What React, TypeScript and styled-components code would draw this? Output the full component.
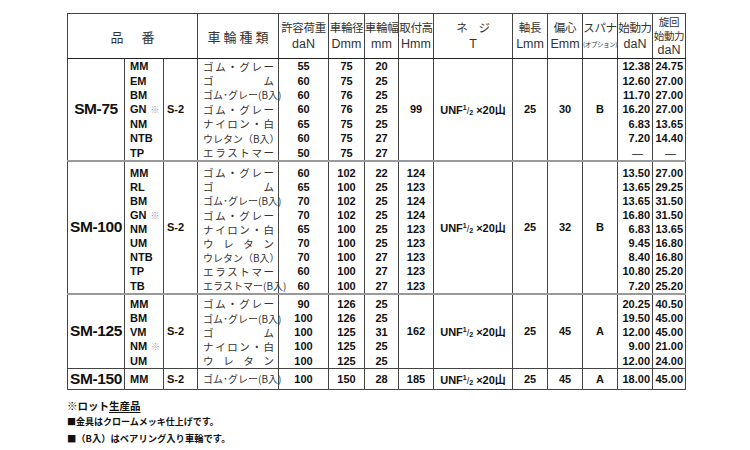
import React from 'react';
import styled, { createGlobalStyle } from 'styled-components';

const GlobalStyle = createGlobalStyle`
  html, body {
    margin: 0;
    padding: 0;
    background: #fff;
  }
  body {
    font-family: 'Liberation Sans', 'Noto Sans CJK JP', sans-serif;
    color: #111;
  }
`;

type Row = {
  code: string;
  mark?: boolean;
  name: string;
  compact?: boolean;
  load: string;
  dia: string;
  width: string;
  h?: string;
  f1: string;
  f2: string;
};

type Group = {
  model: string;
  height: number;
  lh: number;
  pt: number;
  sep: 'none' | 'light' | 'dark';
  h?: string;
  l: string;
  e: string;
  spanner: string;
  rows: Row[];
};

const groups: Group[] = [
  {
    model: 'SM-75', height: 101, lh: 14.4, pt: 0, sep: 'none', h: '99', l: '25', e: '30', spanner: 'B',
    rows: [
      { code: 'MM', name: 'ゴム・グレー', load: '55', dia: '75', width: '20', f1: '12.38', f2: '24.75' },
      { code: 'EM', name: 'ゴム', load: '60', dia: '75', width: '25', f1: '12.60', f2: '27.00' },
      { code: 'BM', name: 'ゴム･グレー(B入)', compact: true, load: '60', dia: '76', width: '25', f1: '11.70', f2: '27.00' },
      { code: 'GN', mark: true, name: 'ゴム・グレー', load: '60', dia: '76', width: '25', f1: '16.20', f2: '27.00' },
      { code: 'NM', name: 'ナイロン・白', load: '65', dia: '75', width: '25', f1: '6.83', f2: '13.65' },
      { code: 'NTB', name: 'ウレタン（B入）', compact: true, load: '60', dia: '75', width: '27', f1: '7.20', f2: '14.40' },
      { code: 'TP', name: 'エラストマー', load: '50', dia: '75', width: '27', f1: '—', f2: '—' },
    ],
  },
  {
    model: 'SM-100', height: 133, lh: 14.1, pt: 4, sep: 'light', l: '25', e: '32', spanner: 'B',
    rows: [
      { code: 'MM', name: 'ゴム・グレー', load: '60', dia: '102', width: '22', h: '124', f1: '13.50', f2: '27.00' },
      { code: 'RL', name: 'ゴム', load: '65', dia: '100', width: '25', h: '123', f1: '13.65', f2: '29.25' },
      { code: 'BM', name: 'ゴム･グレー(B入)', compact: true, load: '70', dia: '102', width: '25', h: '124', f1: '13.65', f2: '31.50' },
      { code: 'GN', mark: true, name: 'ゴム・グレー', load: '70', dia: '102', width: '25', h: '124', f1: '16.80', f2: '31.50' },
      { code: 'NM', name: 'ナイロン・白', load: '65', dia: '100', width: '25', h: '123', f1: '6.83', f2: '13.65' },
      { code: 'UM', name: 'ウレタン', load: '70', dia: '100', width: '25', h: '123', f1: '9.45', f2: '16.80' },
      { code: 'NTB', name: 'ウレタン（B入）', compact: true, load: '70', dia: '100', width: '27', h: '123', f1: '8.40', f2: '16.80' },
      { code: 'TP', name: 'エラストマー', load: '60', dia: '100', width: '27', h: '123', f1: '10.80', f2: '25.20' },
      { code: 'TB', name: 'エラストマー(B入)', compact: true, load: '60', dia: '100', width: '27', h: '123', f1: '7.20', f2: '25.20' },
    ],
  },
  {
    model: 'SM-125', height: 73, lh: 14.2, pt: 2, sep: 'light', h: '162', l: '25', e: '45', spanner: 'A',
    rows: [
      { code: 'MM', name: 'ゴム・グレー', load: '90', dia: '126', width: '25', f1: '20.25', f2: '40.50' },
      { code: 'BM', name: 'ゴム･グレー(B入)', compact: true, load: '100', dia: '126', width: '25', f1: '19.50', f2: '45.00' },
      { code: 'VM', name: 'ゴム', load: '100', dia: '125', width: '31', f1: '12.00', f2: '45.00' },
      { code: 'NM', mark: true, name: 'ナイロン・白', load: '100', dia: '125', width: '25', f1: '9.00', f2: '21.00' },
      { code: 'UM', name: 'ウレタン', load: '100', dia: '125', width: '25', f1: '12.00', f2: '24.00' },
    ],
  },
  {
    model: 'SM-150', height: 21, lh: 20, pt: 0, sep: 'dark', h: '185', l: '25', e: '45', spanner: 'A',
    rows: [
      { code: 'MM', name: 'ゴム･グレー(B入)', compact: true, load: '100', dia: '150', width: '28', f1: '18.00', f2: '45.00' },
    ],
  },
];

const colWidths = [57, 39, 34, 81, 50, 36, 34, 35, 79, 35, 35, 35, 35, 33];

const Page = styled.div`
  width: 750px;
  height: 450px;
  padding: 13px 0 0 67px;
  box-sizing: border-box;
  overflow: hidden;
`;

const Table = styled.table`
  border-collapse: collapse;
  table-layout: fixed;
  width: 618px;
`;

const Th = styled.th`
  height: 44px;
  padding: 0;
  border: 1px solid #444;
  border-bottom-color: #222;
  font-weight: 400;
  color: #333;
  vertical-align: middle;
  text-align: center;
  white-space: nowrap;
`;

const HeadStack = styled.div<{ $gap?: number }>`
  display: flex;
  flex-direction: column;
  align-items: center;
  gap: ${p => p.$gap ?? 3}px;
`;

const HeadJa = styled.div<{ $size?: number }>`
  font-family: 'Noto Sans CJK JP', sans-serif;
  font-size: ${p => p.$size ?? 11.5}px;
  line-height: 14px;
  letter-spacing: -0.3px;
`;

const HeadUnit = styled.div`
  font-family: 'Liberation Sans', Arial, sans-serif;
  font-size: 12.5px;
  line-height: 15px;
`;

const HeadTiny = styled.div`
  font-family: 'Noto Sans CJK JP', sans-serif;
  font-size: 6.5px;
  line-height: 15px;
  letter-spacing: -0.4px;
`;

const TitleJa = styled.div<{ $gap: number }>`
  display: flex;
  justify-content: center;
  gap: ${p => p.$gap}px;
  font-family: 'Noto Sans CJK JP', sans-serif;
  font-size: 13px;
  color: #333;
`;

const Tr = styled.tr<{ $h: number; $sep: Group['sep'] }>`
  height: ${p => p.$h}px;
  & > td {
    border-top: ${p => (p.$sep === 'light' ? '2px solid #999' : '1px solid #222')};
  }
`;

const Td = styled.td`
  padding: 0;
  border: 1px solid #444;
  vertical-align: top;
  font-family: 'Liberation Sans', Arial, sans-serif;
  font-weight: 700;
  font-size: 11px;
  color: #111;
  white-space: nowrap;
`;

const MidTd = styled(Td)`
  vertical-align: middle;
  text-align: center;
`;

const ModelCell = styled(MidTd)`
  font-size: 15.5px;
  letter-spacing: -0.4px;
`;

const SizeCell = styled(MidTd)`
  text-align: left;
  padding-left: 3px;
`;

const Stack = styled.div<{ $pt: number }>`
  padding-top: ${p => p.$pt}px;
`;

const Line = styled.div<{ $lh: number; $align?: 'left' | 'center' | 'right'; $pl?: number; $pr?: number }>`
  height: ${p => p.$lh}px;
  display: flex;
  align-items: center;
  justify-content: ${p => (p.$align === 'right' ? 'flex-end' : p.$align === 'center' ? 'center' : 'flex-start')};
  padding-left: ${p => p.$pl ?? 0}px;
  padding-right: ${p => p.$pr ?? 0}px;
`;

const Mark = styled.span`
  margin-left: 4px;
  font-family: 'Noto Sans CJK JP', sans-serif;
  font-weight: 400;
  font-size: 9px;
  color: #999;
`;

const Spread = styled.div<{ $compact?: boolean }>`
  flex: 1;
  display: flex;
  justify-content: space-between;
  font-family: 'Noto Sans CJK JP', sans-serif;
  font-weight: 400;
  font-size: ${p => (p.$compact ? 10 : 10.5)}px;
  color: #333;
`;

const Dash = styled.span`
  margin-right: 7px;
  font-weight: 400;
`;

const Screw = styled.span`
  font-family: 'Liberation Sans', 'Noto Sans CJK JP', sans-serif;
  font-size: 11px;
  sup, sub {
    font-size: 7px;
    line-height: 0;
  }
  sup { vertical-align: 4px; }
  sub { vertical-align: -1px; }
`;

const Slash = styled.span`
  font-weight: 400;
  font-size: 9px;
`;

const Notes = styled.div`
  margin-top: 8px;
  font-family: 'Noto Sans CJK JP', sans-serif;
  font-weight: 700;
  color: #111;
`;

const Note = styled.div<{ $size: number }>`
  font-size: ${p => p.$size}px;
  line-height: 16px;
  white-space: nowrap;
`;

const LightMark = styled.span`
  font-weight: 400;
`;

const Underlined = styled.span`
  text-decoration: underline;
  text-underline-offset: 2px;
`;

const WheelName: React.FC<{ row: Row }> = ({ row }) => (
  <Spread $compact={row.compact}>
    {Array.from(row.name).map((c, i) => (
      <span key={i}>{c}</span>
    ))}
  </Spread>
);

const Force: React.FC<{ v: string }> = ({ v }) => (v === '—' ? <Dash>—</Dash> : <>{v}</>);

const GroupRow: React.FC<{ g: Group }> = ({ g }) => {
  const col = (render: (r: Row) => React.ReactNode, align: 'left' | 'center' | 'right', pl = 0, pr = 0) => (
    <Td>
      <Stack $pt={g.pt}>
        {g.rows.map((r, i) => (
          <Line key={i} $lh={g.lh} $align={align} $pl={pl} $pr={pr}>
            {render(r)}
          </Line>
        ))}
      </Stack>
    </Td>
  );
  return (
    <Tr $h={g.height} $sep={g.sep}>
      <ModelCell>{g.model}</ModelCell>
      {col(r => (
        <>
          {r.code}
          {r.mark && <Mark>※</Mark>}
        </>
      ), 'left', 5)}
      <SizeCell>S-2</SizeCell>
      {col(r => <WheelName row={r} />, 'left', 5, 4)}
      {col(r => r.load, 'center')}
      {col(r => r.dia, 'center')}
      {col(r => r.width, 'center')}
      {g.h ? <MidTd>{g.h}</MidTd> : col(r => r.h, 'center')}
      <MidTd>
        <Screw>
          UNF<sup>1</sup>
          <Slash>/</Slash>
          <sub>2</sub> ×20山
        </Screw>
      </MidTd>
      <MidTd>{g.l}</MidTd>
      <MidTd>{g.e}</MidTd>
      <MidTd>{g.spanner}</MidTd>
      {col(r => <Force v={r.f1} />, 'right', 0, 2)}
      {col(r => <Force v={r.f2} />, 'right', 0, 2)}
    </Tr>
  );
};

export default function App() {
  return (
    <>
      <GlobalStyle />
      <Page>
        <Table>
          <colgroup>
            {colWidths.map((w, i) => (
              <col key={i} style={{ width: w }} />
            ))}
          </colgroup>
          <thead>
            <tr>
              <Th colSpan={3}>
                <TitleJa $gap={18}>
                  <span>品</span>
                  <span>番</span>
                </TitleJa>
              </Th>
              <Th>
                <TitleJa $gap={3}>
                  <span>車</span>
                  <span>輪</span>
                  <span>種</span>
                  <span>類</span>
                </TitleJa>
              </Th>
              <Th>
                <HeadStack>
                  <HeadJa>許容荷重</HeadJa>
                  <HeadUnit>daN</HeadUnit>
                </HeadStack>
              </Th>
              <Th>
                <HeadStack>
                  <HeadJa>車輪径</HeadJa>
                  <HeadUnit>Dmm</HeadUnit>
                </HeadStack>
              </Th>
              <Th>
                <HeadStack>
                  <HeadJa>車輪幅</HeadJa>
                  <HeadUnit>mm</HeadUnit>
                </HeadStack>
              </Th>
              <Th>
                <HeadStack>
                  <HeadJa>取付高</HeadJa>
                  <HeadUnit>Hmm</HeadUnit>
                </HeadStack>
              </Th>
              <Th>
                <HeadStack>
                  <HeadJa>ネ　ジ</HeadJa>
                  <HeadUnit>T</HeadUnit>
                </HeadStack>
              </Th>
              <Th>
                <HeadStack>
                  <HeadJa>軸長</HeadJa>
                  <HeadUnit>Lmm</HeadUnit>
                </HeadStack>
              </Th>
              <Th>
                <HeadStack>
                  <HeadJa>偏心</HeadJa>
                  <HeadUnit>Emm</HeadUnit>
                </HeadStack>
              </Th>
              <Th>
                <HeadStack>
                  <HeadJa>スパナ</HeadJa>
                  <HeadTiny>(オプション)</HeadTiny>
                </HeadStack>
              </Th>
              <Th>
                <HeadStack>
                  <HeadJa>始動力</HeadJa>
                  <HeadUnit>daN</HeadUnit>
                </HeadStack>
              </Th>
              <Th>
                <HeadStack $gap={0}>
                  <HeadJa $size={10.5}>旋回</HeadJa>
                  <HeadJa $size={10.5}>始動力</HeadJa>
                  <HeadUnit>daN</HeadUnit>
                </HeadStack>
              </Th>
            </tr>
          </thead>
          <tbody>
            {groups.map(g => (
              <GroupRow key={g.model} g={g} />
            ))}
          </tbody>
        </Table>
        <Notes>
          <Note $size={10.5}>
            <LightMark>※</LightMark>ロット<Underlined>生産品</Underlined>
          </Note>
          <Note $size={9}>■金具はクロームメッキ仕上げです。</Note>
          <Note $size={9.3}>■（B入）はベアリング入り車輪です。</Note>
        </Notes>
      </Page>
    </>
  );
}
